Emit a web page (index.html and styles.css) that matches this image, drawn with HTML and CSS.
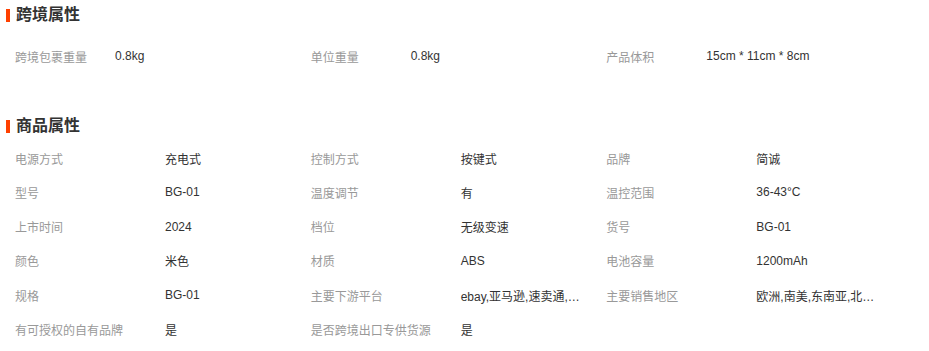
FILE: index.html
```html
<!DOCTYPE html>
<html lang="zh-CN">
<head>
<meta charset="utf-8">
<link rel="stylesheet" href="styles.css">
</head>
<body>
<section class="sec sec-cross">
  <h2 class="sec-title">跨境属性</h2>
  <div class="grid">
    <div class="cell"><span class="label">跨境包裹重量</span><span class="value">0.8kg</span></div>
    <div class="cell"><span class="label">单位重量</span><span class="value">0.8kg</span></div>
    <div class="cell"><span class="label">产品体积</span><span class="value">15cm * 11cm * 8cm</span></div>
  </div>
</section>
<section class="sec sec-goods">
  <h2 class="sec-title">商品属性</h2>
  <div class="grid">
    <div class="cell"><span class="label">电源方式</span><span class="value">充电式</span></div>
    <div class="cell"><span class="label">控制方式</span><span class="value">按键式</span></div>
    <div class="cell"><span class="label">品牌</span><span class="value">简诚</span></div>
    <div class="cell"><span class="label">型号</span><span class="value">BG-01</span></div>
    <div class="cell"><span class="label">温度调节</span><span class="value">有</span></div>
    <div class="cell"><span class="label">温控范围</span><span class="value">36-43°C</span></div>
    <div class="cell"><span class="label">上市时间</span><span class="value">2024</span></div>
    <div class="cell"><span class="label">档位</span><span class="value">无级变速</span></div>
    <div class="cell"><span class="label">货号</span><span class="value">BG-01</span></div>
    <div class="cell"><span class="label">颜色</span><span class="value">米色</span></div>
    <div class="cell"><span class="label">材质</span><span class="value">ABS</span></div>
    <div class="cell"><span class="label">电池容量</span><span class="value">1200mAh</span></div>
    <div class="cell"><span class="label">规格</span><span class="value">BG-01</span></div>
    <div class="cell"><span class="label">主要下游平台</span><span class="value">ebay,亚马逊,速卖通,…</span></div>
    <div class="cell"><span class="label">主要销售地区</span><span class="value">欧洲,南美,东南亚,北…</span></div>
    <div class="cell"><span class="label">有可授权的自有品牌</span><span class="value">是</span></div>
    <div class="cell"><span class="label">是否跨境出口专供货源</span><span class="value">是</span></div>
  </div>
</section>
</body>
</html>
```
FILE: styles.css
```css
html, body {
  margin: 0;
  padding: 0;
  background: #fff;
}
body {
  font-family: "Liberation Sans", "Noto Sans CJK SC", sans-serif;
  font-size: 12px;
  color: #333;
}
.sec-title {
  margin: 0;
  padding-left: 16px;
  position: relative;
  font-size: 16px;
  font-weight: bold;
  line-height: 22px;
  color: #333;
}
.sec-title::before {
  content: "";
  position: absolute;
  left: 6px;
  top: 5px;
  width: 4px;
  height: 13px;
  background: #ff4000;
}
.sec-cross .sec-title { margin-top: 4px; }
.sec-cross .grid { margin-top: 13px; }
.sec-goods .sec-title { margin-top: 42px; }
.sec-goods .grid { margin-top: 4px; }
.grid {
  display: grid;
  grid-template-columns: repeat(3, 295.67px);
  padding-left: 15px;
}
.cell {
  display: flex;
  align-items: center;
  height: 34.2px;
  white-space: nowrap;
}
.label {
  color: #999;
  flex: none;
}
.sec-cross .label { width: 100px; }
.sec-goods .label { width: 150px; }
.value {
  color: #333;
}
```
